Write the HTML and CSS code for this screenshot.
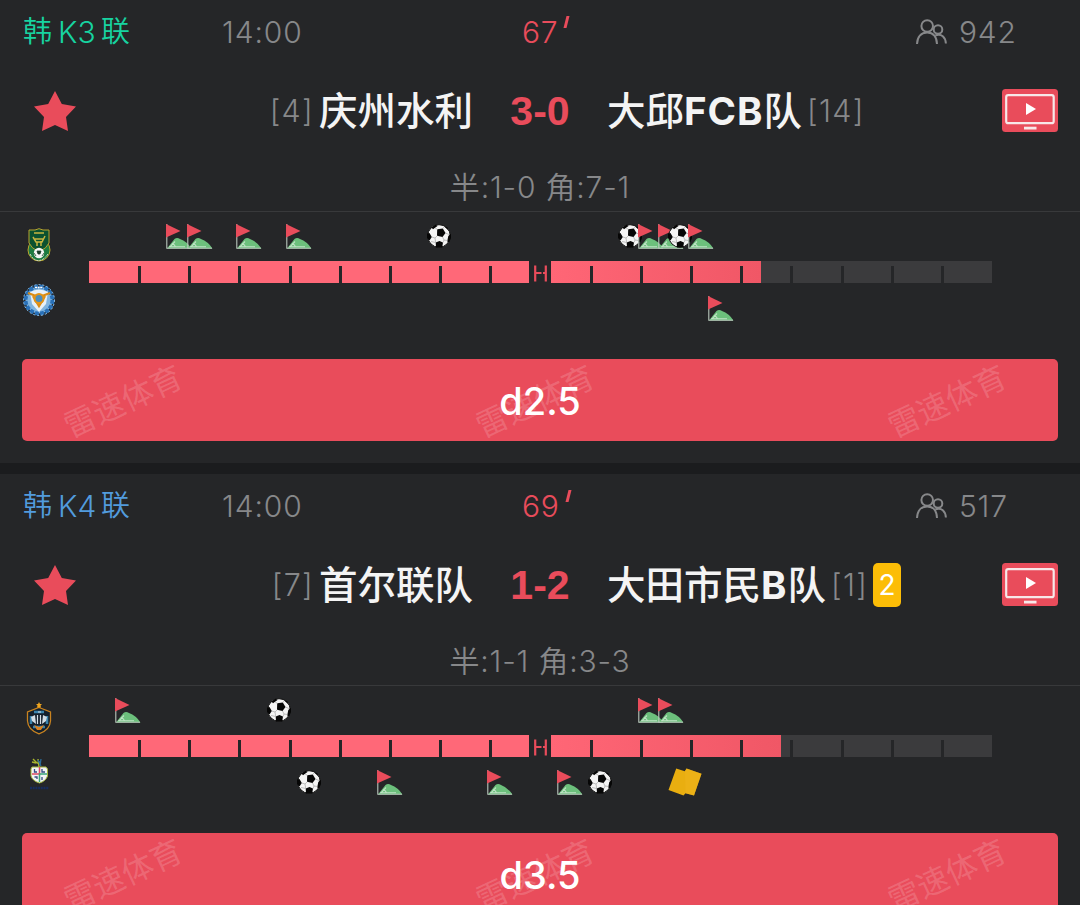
FILE: index.html
```html
<!DOCTYPE html>
<html lang="zh-CN">
<head>
    <meta charset="UTF-8">
    <meta name="viewport" content="width=device-width, initial-scale=1.0">
    <title>比分</title>
    <link rel="stylesheet" href="styles.css">
</head>
<body>

    <!-- shared icons -->
    <svg class="sprite">
        <symbol id="star" viewBox="0 0 42 40">
            <path d="M21 0 27.8 13.1 42 15.6 32 25.9 34 40 21 34 8 40 10 25.9 0 15.6 14.2 13.1Z" fill="#e94c5b"/>
        </symbol>
        <symbol id="people" viewBox="0 0 31 26">
            <g fill="none" stroke="#87888a" stroke-width="2">
                <circle cx="11.2" cy="7" r="5.8"/>
                <circle cx="22" cy="10.5" r="4.3"/>
                <path d="M1 25C1.300 17.500 5.500 13.400 11.200 13.400S20.800 17.500 21 25M19.500 16.300C25.500 14.300 29.500 18 29.900 24.500"/>
            </g>
        </symbol>
        <symbol id="tv" viewBox="0 0 56 43">
            <rect width="56" height="43" rx="3.5" fill="#e94c5b"/>
            <rect x="4.200" y="6.200" width="47.500" height="28" rx="2" fill="none" stroke="#f7e8e9" stroke-width="2.200"/>
            <path d="M24 14 34 20 24 26Z" fill="#fff"/>
            <rect x="22" y="37.700" width="12.500" height="2.800" fill="#f7e8e9"/>
        </symbol>
        <symbol id="corner" viewBox="0 0 26 25">
            <path d="M1 24.500 8.500 15Q11 13.200 14 15 21 17.500 25.500 24.500Z" fill="#6cc07c"/>
            <path d="M4 22.800 9 17.500M6 19.500Q8.500 20 9.500 22.800M3 22.800H19" fill="none" stroke="#bfe2c5" stroke-width="1.100"/>
            <path d="M.8 0V24.300H25" fill="none" stroke="#b9c7bc" stroke-width="1.100"/>
            <path d="M0 0 14.500 7 0 13.500Z" fill="#e94c5b"/>
        </symbol>
        <symbol id="ball" viewBox="0 0 24 24">
            <circle cx="12" cy="12" r="11.300" fill="#f4f4f4" stroke="#111" stroke-width="1"/>
            <path d="M10.200 5.300 15.800 4.400 18.500 9 15.500 13 10 11.800Z" fill="#060606"/>
            <path d="M4.500 3.500 8.500.8 10.500 2 6 5.200ZM0 9.500 2.500 9 4.800 13 2.500 16.500 0 14ZM8.700 18.500 12.500 17 16 18.600 15.200 23.500 9 23.500ZM24 9.500 21.300 12 20.200 17.500 22 18.500 24 14ZM15.500.8 20.500 3.500 21 6Z" fill="#060606"/>
            <path d="M10.500 5.500 8 3.800M15.800 4.600 17.500 2.500M18.300 9 22 10.500M15.500 13 17 16 16 18.600M17 16 20.500 16.500M10.300 11.800 8 14 8.700 18.500M8 14 4.800 13M4 17.500 8.700 18.500" fill="none" stroke="#999" stroke-width=".6"/>
        </symbol>
        <symbol id="cards" viewBox="0 0 34 28">
            <path d="M8.200.5 16.800 3.200 18.500.6 33.500 5.800 26 27.500 17.500 25.200 15.500 27.500.5 22Z" fill="#e9ae10"/>
            <path d="M17 3.200 18.500.6 33.500 5.800 26 27.500 17.500 25.200Z" fill="#efb21b" opacity=".6"/>
        </symbol>
    </svg>

    <section class="match">
        <header class="match-head">
            <div class="league green"><span>韩</span><span class="code">K3</span><span>联</span></div>
            <div class="kickoff">14:00</div>
            <div class="minute">67<i></i></div>
            <div class="viewers"><svg><use href="#people"/></svg>942</div>
        </header>

        <div class="teams">
            <svg class="star"><use href="#star"/></svg>
            <div class="home"><span class="rank">[4]</span><b>庆州水利</b></div>
            <div class="score">3-0</div>
            <div class="away"><b>大邱<em>FCB</em>队</b><span class="rank">[14]</span></div>
            <svg class="tv"><use href="#tv"/></svg>
        </div>

        <div class="stats">半:1-0 角:7-1</div>

        <div class="timeline">
            <div class="crests">
                <svg width="24" height="34" viewBox="0 0 24 34">
                    <circle cx="12" cy="22" r="11" fill="#1c7a40" stroke="#b8a52f"/>
                    <path d="M2 2H8L12 .7 16 2H22V15Q20 20 12 24 4 20 2 15Z" fill="#0b5130" stroke="#b8a52f"/>
                    <path d="M7 5H17M6 9 9 14H15L18 8M10 14V18M14 13V18M8 11H16" fill="none" stroke="#c8b540" stroke-width="1.500"/>
                    <circle cx="12" cy="25" r="5.200" fill="#f3f5f3"/>
                    <path d="M10 23H14L13 26H11ZM7 25 9 28M17 25 15 28" fill="#173e29" stroke="#173e29" stroke-width=".8"/>
                    <path d="M3 26Q7 33 12 32.500T21 26" fill="none" stroke="#dfe7df" stroke-width="1" stroke-dasharray="2 1"/>
                </svg>
                <svg width="34" height="32" viewBox="0 0 34 32">
                    <circle cx="17" cy="16" r="13.500" fill="#7fb4df" stroke="#2870b8" stroke-width="4" stroke-dasharray="4 1.300"/>
                    <circle cx="17" cy="16" r="15.500" fill="none" stroke="#8dbfe8" stroke-width="1" stroke-dasharray="2 2"/>
                    <path d="M8 8Q17 3 26 8L24 20 17 28 10 20Z" fill="#e7f0f6"/>
                    <path d="M6 9 14 12M28 9 20 12M11 12 17 22 23 12" fill="none" stroke="#d98b14" stroke-width="2.400"/>
                    <circle cx="17" cy="14.500" r="4.500" fill="#4b8dbb" stroke="#e29316" stroke-width="2"/>
                    <path d="M13 3.500H21" stroke="#fff" stroke-width="1.500" stroke-dasharray="2 .6"/>
                </svg>
            </div>
            <div class="track">
                <div class="lane">
                    <svg class="corner" style="left: 77px"><use href="#corner"/></svg>
                    <svg class="corner" style="left: 98px"><use href="#corner"/></svg>
                    <svg class="corner" style="left: 147.500px"><use href="#corner"/></svg>
                    <svg class="corner" style="left: 197.500px"><use href="#corner"/></svg>
                    <svg class="ball" style="left: 338.500px"><use href="#ball"/></svg>
                    <svg class="ball" style="left: 529px"><use href="#ball"/></svg>
                    <svg class="corner" style="left: 549.500px"><use href="#corner"/></svg>
                    <svg class="corner" style="left: 569px"><use href="#corner"/></svg>
                    <svg class="ball" style="left: 579.500px"><use href="#ball"/></svg>
                    <svg class="corner" style="left: 599.500px"><use href="#corner"/></svg>
                </div>
                <div class="bar">
                    <div class="half first"><i></i><i></i><i></i><i></i><i></i><i></i><i></i><i></i></div>
                    <div class="break"><svg viewBox="0 0 13 17"><path d="M1.200 .5V16.500M11.800 .5V16.500M1 8H7.500M9 8H12" stroke="#e94c5b" stroke-width="2.200"/></svg></div>
                    <div class="half second" style="--played: 210px"><i></i><i></i><i></i><i></i><i></i><i></i><i></i><i></i></div>
                </div>
                <div class="lane">
                    <svg class="corner" style="left: 619.500px"><use href="#corner"/></svg>
                </div>
            </div>
        </div>

        <div class="tip">
            <span class="mark">雷速体育</span><span class="mark">雷速体育</span><span class="mark">雷速体育</span>
            <strong>d2.5</strong>
        </div>
    </section>

    <section class="match">
        <header class="match-head">
            <div class="league blue"><span>韩</span><span class="code">K4</span><span>联</span></div>
            <div class="kickoff">14:00</div>
            <div class="minute">69<i></i></div>
            <div class="viewers"><svg><use href="#people"/></svg>517</div>
        </header>

        <div class="teams">
            <svg class="star"><use href="#star"/></svg>
            <div class="home"><span class="rank">[7]</span><b>首尔联队</b></div>
            <div class="score">1-2</div>
            <div class="away"><b>大田市民<em>B</em>队</b><span class="rank">[1]</span><span class="yellow">2</span></div>
            <svg class="tv"><use href="#tv"/></svg>
        </div>

        <div class="stats">半:1-1 角:3-3</div>

        <div class="timeline">
            <div class="crests">
                <svg width="26" height="33" viewBox="0 0 26 33">
                    <path d="M13 5.500 24.500 10V19Q24 28 13 31.800 2 28 1.500 19V10Z" fill="#14202c" stroke="#c98320" stroke-width="1.300"/>
                    <path d="M13 0 14 2H16L14.500 3.500 15 5.500H11L11.500 3.500 10 2H12Z" fill="#f0a51e"/>
                    <path d="M8 10H18M5 14V22M21 14V22M7 25H19" stroke="#3a83ac" stroke-width="2.500"/>
                    <path d="M5 15 9 13 10 22 6 19ZM21 15 17 13 16 22 20 19Z" fill="#d3dde4"/>
                    <path d="M11.500 13V22M14.500 13V22M12 10H15" stroke="#d3dde4" stroke-width="1.200"/>
                    <path d="M8 23 13 25 18 23 15 28H11Z" fill="#d98322"/>
                </svg>
                <svg width="22" height="34" viewBox="0 0 22 34">
                    <path d="M5 2 9 6 13 5M10 2 11 10M4 5 8 6" fill="none" stroke="#a8b52d" stroke-width="1.400"/>
                    <path d="M10 3 13 9M13 2 12 8" stroke="#2a6c9b" stroke-width="1.300"/>
                    <path d="M4 10H18L19.500 12V19Q18 24 11.500 26 4.500 24 3 19V12Z" fill="#f1f3f5" stroke="#a4b63d"/>
                    <path d="M11.500 10V17H4" fill="none" stroke="#dc4964" stroke-width="1.500"/>
                    <path d="M11.500 25V17H19" fill="none" stroke="#3aa678" stroke-width="1.500"/>
                    <path d="M6.500 12V15H9M14 12V15H17M6.500 20H9V22M14 20V23" fill="none" stroke="#344c82" stroke-width="1.300"/>
                    <path d="M2 31H21" stroke="#172c5e" stroke-width="2.500" stroke-dasharray="2 .7"/>
                </svg>
            </div>
            <div class="track">
                <div class="lane">
                    <svg class="corner" style="left: 26.500px"><use href="#corner"/></svg>
                    <svg class="ball" style="left: 178.500px"><use href="#ball"/></svg>
                    <svg class="corner" style="left: 549.500px"><use href="#corner"/></svg>
                    <svg class="corner" style="left: 569px"><use href="#corner"/></svg>
                </div>
                <div class="bar">
                    <div class="half first"><i></i><i></i><i></i><i></i><i></i><i></i><i></i><i></i></div>
                    <div class="break"><svg viewBox="0 0 13 17"><path d="M1.200 .5V16.500M11.800 .5V16.500M1 8H7.500M9 8H12" stroke="#e94c5b" stroke-width="2.200"/></svg></div>
                    <div class="half second" style="--played: 230px"><i></i><i></i><i></i><i></i><i></i><i></i><i></i><i></i></div>
                </div>
                <div class="lane">
                    <svg class="ball" style="left: 208.500px"><use href="#ball"/></svg>
                    <svg class="corner" style="left: 288px"><use href="#corner"/></svg>
                    <svg class="corner" style="left: 398.500px"><use href="#corner"/></svg>
                    <svg class="corner" style="left: 468.500px"><use href="#corner"/></svg>
                    <svg class="ball" style="left: 499.500px"><use href="#ball"/></svg>
                    <svg class="cards" style="left: 579.500px"><use href="#cards"/></svg>
                </div>
            </div>
        </div>

        <div class="tip">
            <span class="mark">雷速体育</span><span class="mark">雷速体育</span><span class="mark">雷速体育</span>
            <strong>d3.5</strong>
        </div>
    </section>

</body>
</html>
```
FILE: styles.css
```css
* {
    margin: 0;
    padding: 0;
    box-sizing: border-box;
}

html,
body {
    height: 905px;
    overflow: hidden;
}

body {
    background: #252628;
    color: #87888a;
    font-family: Inter, "Noto Sans CJK SC", sans-serif;
    font-size: 30px;
}

svg {
    display: block;
    overflow: visible;
}

.sprite {
    position: absolute;
    width: 0;
    height: 0;
}

.match {
    height: 474px;
    border-bottom: 11px solid #1b1c1e;
    background: #252628;
}

/* league, kick-off, minute, viewers */
.match-head {
    display: grid;
    grid-template-columns: 200px 300px 394px 1fr;
    height: 64px;
    padding-left: 22px;
    line-height: 64px;
    font-weight: 350;
    letter-spacing: .8px;
}

.league {
    display: flex;
    padding-left: 1px;
    font-size: 29px;
    letter-spacing: 0;
}

.league .code {
    width: 49px;
    padding-left: 6px;
    font-size: 30px;
}

.green {
    color: #17d3a0;
}

.blue {
    color: #529bdd;
}

.kickoff {
    letter-spacing: .9px;
}

.minute {
    display: flex;
    color: #e94c5b;
}

.minute i {
    width: 3px;
    height: 12px;
    margin: 16px 0 0 7px;
    background: #e94c5b;
    transform: skewX(-14deg);
}

.viewers {
    display: flex;
    align-items: center;
    gap: 12px;
}

.viewers svg {
    width: 31px;
    height: 26px;
}

/* team names and score */
.teams {
    display: grid;
    grid-template-columns: 66px 1fr 134px 1fr 66px;
    align-items: center;
    height: 92px;
    padding: 0 22px;
    line-height: 92px;
}

.star {
    width: 42px;
    height: 40px;
    margin-left: 12px;
}

.tv {
    width: 56px;
    height: 43px;
    justify-self: end;
}

.home,
.away {
    display: flex;
    align-items: center;
    white-space: nowrap;
}

.home {
    justify-content: flex-end;
    gap: 5px;
}

.away {
    gap: 5px;
}

.teams b {
    padding-top: 1px;
    color: #f4f4f4;
    font-size: 38.5px;
    font-weight: 500;
}

.teams em {
    font-style: normal;
    font-weight: 700;
    letter-spacing: 1px;
}

.rank {
    font-weight: 300;
    font-size: 30.5px;
    letter-spacing: 1.3px;
}

.score {
    color: #e94c5b;
    font-family: "Liberation Sans", sans-serif;
    font-size: 41px;
    font-weight: 700;
    text-align: center;
}

.yellow {
    width: 28px;
    height: 44px;
    border-radius: 5px;
    background: #fcbd07;
    color: #fff;
    font-size: 28px;
    line-height: 45px;
    text-align: center;
}

.stats {
    height: 56px;
    border-bottom: 1px solid #38393b;
    line-height: 62px;
    font-weight: 350;
    text-align: center;
    letter-spacing: .8px;
}

/* events along the match clock */
.timeline {
    display: flex;
    height: 146.5px;
}

.crests {
    display: flex;
    flex-direction: column;
    align-items: center;
    gap: 22px;
    width: 88.5px;
    padding: 16px 11px 0 0;
}

.track {
    width: 903.5px;
    padding-top: 12px;
}

.lane {
    position: relative;
    height: 25px;
}

.lane svg {
    position: absolute;
    top: 0;
}

.corner {
    width: 26px;
    height: 25px;
}

.ball {
    width: 24px;
    height: 24px;
}

.lane .cards {
    top: -2px;
    width: 34px;
    height: 28px;
}

.bar {
    display: flex;
    height: 22px;
    margin: 12.4px 0 12.6px;
}

.half {
    display: flex;
    align-items: flex-end;
}

.half i {
    width: 50.2px;
    height: 17px;
    border-right: 3px solid #252628;
}

.first {
    width: 440.5px;
    background: #ff6878;
}

.first i:first-child {
    width: 52.5px;
}

.second {
    width: 441px;
    background: linear-gradient(90deg, #ff6676, #f05766) no-repeat 0 0 / var(--played) 100% #3b3b3d;
}

.second i:first-child {
    width: 41.7px;
}

.break {
    width: 22px;
    padding: 3.500px 4.500px;
}

.break svg {
    width: 13px;
    height: 17px;
}

/* tip button with repeated watermark */
.tip {
    position: relative;
    display: flex;
    align-items: center;
    justify-content: space-between;
    height: 82.5px;
    margin: 0 22px;
    padding: 0 49px 2px 37px;
    border-radius: 5px;
    background: #e94c5b;
}

.mark {
    width: 126px;
    color: rgba(255, 255, 255, .17);
    font-size: 31.5px;
    white-space: nowrap;
    transform: rotate(-25deg);
}

.tip strong {
    position: absolute;
    inset: 0;
    color: #fff;
    font-size: 38px;
    font-weight: 500;
    line-height: 84px;
    text-align: center;
}
```
